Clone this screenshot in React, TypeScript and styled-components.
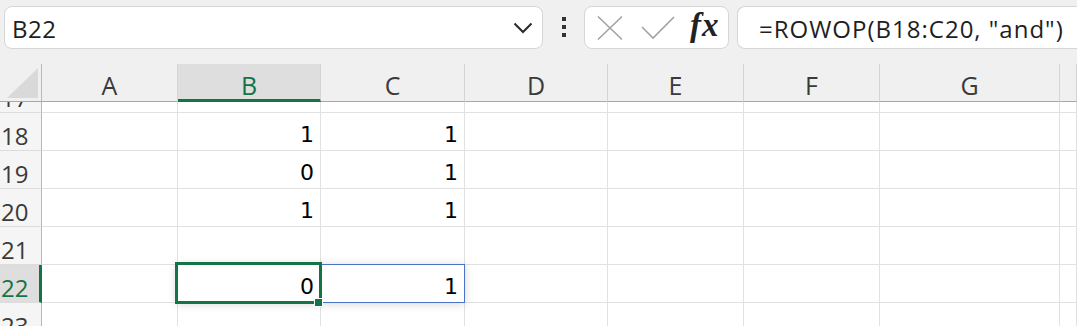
import React from 'react';
import styled, { createGlobalStyle } from 'styled-components';

const GREEN = '#137547';
const UI_FONT = '"Open Sans", "Noto Sans", sans-serif';
const CELL_FONT = '"DejaVu Sans", "Noto Sans", sans-serif';

const Global = createGlobalStyle`
  html, body { margin: 0; padding: 0; background: #ffffff; overflow: hidden; }
  * { box-sizing: border-box; }
`;

const Page = styled.div`
  width: 1077px;
  height: 326px;
  overflow: hidden;
  background: #f0f0f0;
  display: flex;
  flex-direction: column;
`;

const Bar = styled.div`
  height: 64px;
  flex: none;
  display: flex;
  align-items: flex-start;
  padding: 6px 0 0 4px;
`;

const Box = styled.div<{ $w?: number; $open?: boolean }>`
  height: 43px;
  width: ${(p) => (p.$w ? `${p.$w}px` : 'auto')};
  flex: ${(p) => (p.$w ? 'none' : '1')};
  background: #ffffff;
  border: 1px solid #d6d6d6;
  border-radius: ${(p) => (p.$open ? '8px 0 0 8px' : '8px')};
  border-right: ${(p) => (p.$open ? 'none' : '1px solid #d6d6d6')};
  display: flex;
  align-items: center;
  font-family: ${UI_FONT};
  font-size: 24px;
  color: #1e1e1e;
`;

const NameText = styled.span`
  flex: 1;
  padding: 2px 0 0 7px;
  letter-spacing: 0.5px;
`;

const Chevron = styled.svg`
  margin-right: 9px;
`;

const Dots = styled.div`
  width: 41px;
  flex: none;
  display: flex;
  flex-direction: column;
  align-items: center;
  gap: 4px;
  padding-top: 11px;
`;

const Dot = styled.span`
  width: 4px;
  height: 4px;
  background: #333333;
`;

const IconRow = styled.div`
  display: flex;
  align-items: center;
  padding-left: 12px;
`;

const Fx = styled.span`
  font-family: "Liberation Serif", "DejaVu Serif", serif;
  font-style: italic;
  font-weight: bold;
  font-size: 33px;
  letter-spacing: 1px;
  color: #222222;
  margin-left: 15px;
  line-height: 1;
  padding-bottom: 4px;
`;

const FormulaText = styled.span`
  padding: 2px 0 0 21px;
  white-space: nowrap;
  letter-spacing: 1px;
`;

const Spacer = styled.div`
  width: 8px;
  flex: none;
`;

const Sheet = styled.div`
  position: relative;
  flex: 1;
  display: grid;
  grid-template-columns: 42px 136px 143px 144px 143px 136px 136px 180px 1fr;
  grid-template-rows: 38px 11px repeat(6, 38px);
  background: #ffffff;
`;

const ColHead = styled.div<{ $sel?: boolean; $corner?: boolean }>`
  position: relative;
  background: ${(p) => (p.$sel ? '#dedede' : '#f0f0f0')};
  border-right: 1px solid ${(p) => (p.$corner ? '#b8b8b8' : '#d4d4d4')};
  border-bottom: ${(p) => (p.$sel ? `3px solid ${GREEN}` : '1px solid #a8a8a8')};
  display: flex;
  align-items: center;
  justify-content: center;
  font-family: ${UI_FONT};
  font-size: 25px;
  color: ${(p) => (p.$sel ? GREEN : '#3a3a3a')};
  padding-top: ${(p) => (p.$sel ? '6px' : '4px')};
`;

const Corner = styled.svg`
  position: absolute;
  right: 3px;
  bottom: 3px;
`;

const RowHead = styled.div<{ $sel?: boolean }>`
  background: ${(p) => (p.$sel ? '#dedede' : '#f5f5f5')};
  border-right: ${(p) => (p.$sel ? `3px solid ${GREEN}` : '1px solid #b8b8b8')};
  border-bottom: 1px solid #dcdcdc;
  display: flex;
  align-items: flex-end;
  overflow: hidden;
  font-family: ${UI_FONT};
  font-size: 24px;
  color: ${(p) => (p.$sel ? GREEN : '#3a3a3a')};
`;

const RowLabel = styled.span`
  flex: none;
  height: 37px;
  line-height: 37px;
  padding: 4px 0 0 0;
  margin-left: 1px;
  display: block;
`;

const Cell = styled.div`
  border-right: 1px solid #e1e1e1;
  border-bottom: 1px solid #e1e1e1;
  display: flex;
  align-items: center;
  justify-content: flex-end;
  padding: 5px 6px 0 0;
  font-family: ${CELL_FONT};
  font-size: 22px;
  color: #000000;
  overflow: hidden;
`;

const Spill = styled.div`
  position: absolute;
  left: 176px;
  top: 200px;
  width: 289px;
  height: 39px;
  border: 1px solid #4a73c4;
  box-shadow: 0 1px 9px rgba(0, 0, 0, 0.16);
  pointer-events: none;
`;

const Active = styled.div`
  position: absolute;
  left: 175px;
  top: 198px;
  width: 147px;
  height: 42px;
  border: 3px solid ${GREEN};
  pointer-events: none;
`;

const Handle = styled.div`
  position: absolute;
  left: 314px;
  top: 234px;
  width: 9px;
  height: 9px;
  background: ${GREEN};
  border: 1px solid #ffffff;
`;

const cols = ['A', 'B', 'C', 'D', 'E', 'F', 'G', ''];

const rows: { n: number; v: (string | number)[] }[] = [
  { n: 17, v: [] },
  { n: 18, v: ['', 1, 1] },
  { n: 19, v: ['', 0, 1] },
  { n: 20, v: ['', 1, 1] },
  { n: 21, v: [] },
  { n: 22, v: ['', 0, 1] },
  { n: 23, v: [] },
];

export default function App() {
  return (
    <Page>
      <Global />
      <Bar>
        <Box $w={539}>
          <NameText>B22</NameText>
          <Chevron width="20" height="12" viewBox="0 0 20 12">
            <polyline points="1.5,1.5 10,10 18.5,1.5" fill="none" stroke="#2a2a2a" strokeWidth="2" />
          </Chevron>
        </Box>
        <Dots>
          <Dot />
          <Dot />
          <Dot />
        </Dots>
        <Box $w={145}>
          <IconRow>
            <svg width="26" height="26" viewBox="0 0 26 26">
              <path d="M1 1.5 L25 24.5 M25 1.5 L1 24.5" stroke="#a3a3a3" strokeWidth="1.6" fill="none" />
            </svg>
            <svg width="34" height="24" viewBox="0 0 34 24" style={{ marginLeft: 18 }}>
              <polyline points="1,11 12,22 33,1" fill="none" stroke="#a3a3a3" strokeWidth="1.6" />
            </svg>
            <Fx>fx</Fx>
          </IconRow>
        </Box>
        <Spacer />
        <Box $open>
          <FormulaText>=ROWOP(B18:C20, "and")</FormulaText>
        </Box>
      </Bar>
      <Sheet>
        <ColHead $corner>
          <Corner width="31" height="30" viewBox="0 0 31 30">
            <polygon points="31,0 31,30 0,30" fill="#d9d9d9" />
          </Corner>
        </ColHead>
        {cols.map((c, i) => (
          <ColHead key={i} $sel={c === 'B'}>
            {c}
          </ColHead>
        ))}
        {rows.map((r) => (
          <React.Fragment key={r.n}>
            <RowHead $sel={r.n === 22}>
              <RowLabel>{r.n}</RowLabel>
            </RowHead>
            {cols.map((_, i) => (
              <Cell key={i}>{r.v[i] !== undefined ? r.v[i] : ''}</Cell>
            ))}
          </React.Fragment>
        ))}
        <Spill />
        <Active />
        <Handle />
      </Sheet>
    </Page>
  );
}
